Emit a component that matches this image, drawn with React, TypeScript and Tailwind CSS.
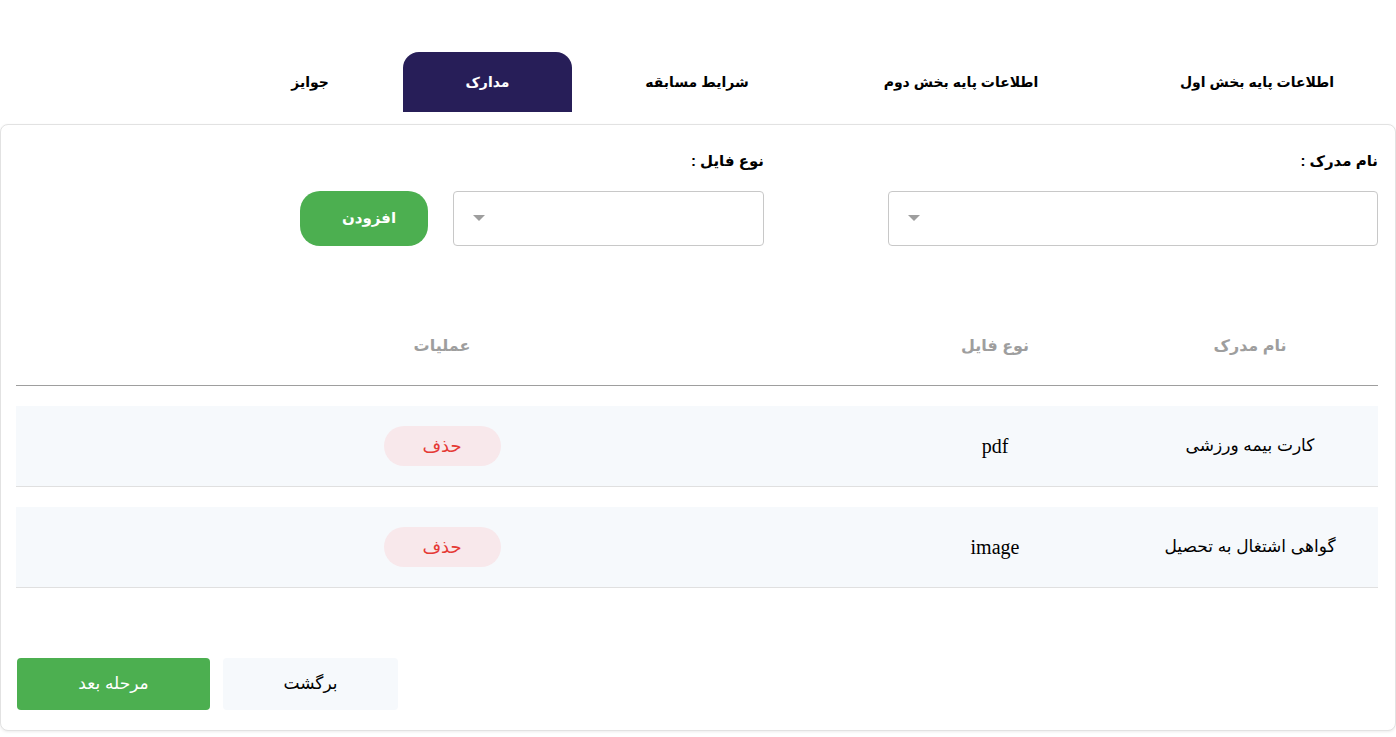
import React from "react";

const tabs = [
  { label: "اطلاعات پایه بخش اول", w: "w-[278px]", active: false },
  { label: "اطلاعات پایه بخش دوم", w: "w-[280px]", active: false },
  { label: "شرایط مسابقه", w: "w-[214px]", active: false },
  { label: "مدارک", w: "w-[169px] mr-[1px]", active: true },
  { label: "جوایز", w: "w-[152px]", active: false },
];

const rows = [
  { name: "کارت بیمه ورزشی", type: "pdf" },
  { name: "گواهی اشتغال به تحصیل", type: "image" },
];

function Caret() {
  return (
    <svg width="12" height="7" viewBox="0 0 12 7" className="shrink-0">
      <path d="M0 0 L12 0 L6 6 Z" fill="#9e9e9e" />
    </svg>
  );
}

function SelectBox({ w }: { w: string }) {
  return (
    <div
      className={`${w} h-[55px] rounded-[4px] border border-[#c8c8c8] bg-white flex items-center justify-end pl-[19px]`}
    >
      <Caret />
    </div>
  );
}

export default function App() {
  return (
    <div
      dir="rtl"
      className="w-[1396px] h-[737px] bg-white overflow-hidden text-black"
      style={{ fontFamily: '"Liberation Sans", "DejaVu Sans", sans-serif' }}
    >
      <div className="h-[52px]" />
      <div className="flex gap-[17px] h-[60px]">
        {tabs.map((t) => (
          <div
            key={t.label}
            className={`${t.w} h-[60px] flex items-center justify-center text-[14px] font-bold ${
              t.active ? "bg-[#271e58] text-white rounded-t-[16px]" : "text-black"
            }`}
          >
            {t.label}
          </div>
        ))}
      </div>

      <div className="mt-3 w-[1396px] h-[607px] rounded-[8px] border border-[#e2e2e2] shadow-[0_1px_3px_rgba(0,0,0,0.08)] bg-white pt-6 pr-[17px] pl-[16px] flex flex-col">
        <div className="flex items-end gap-0">
          <div className="w-[490px] flex flex-col">
            <div className="h-6 leading-6 text-[15px] font-bold mb-[18px]">نام مدرک :</div>
            <SelectBox w="w-[490px]" />
          </div>
          <div className="w-[311px] mr-[124px] flex flex-col">
            <div className="h-6 leading-6 text-[15px] font-bold mb-[18px]">نوع فایل :</div>
            <SelectBox w="w-[311px]" />
          </div>
          <button className="mr-[25px] w-[128px] h-[55px] rounded-[20px] bg-[#4caf50] text-white text-[15px] font-bold flex items-center justify-center pl-[10px]">
            افزودن
          </button>
        </div>

        <div className="mt-[60px] w-[1362px] flex flex-col">
          <div className="flex h-[80px] border-b border-[#9e9e9e] items-center text-[#9e9e9e] text-[16px] font-bold">
            <div className="w-[256px] text-center">نام مدرک</div>
            <div className="w-[254px] text-center">نوع فایل</div>
            <div className="flex-1 text-center">عملیات</div>
          </div>
          {rows.map((r) => (
            <div
              key={r.name}
              className="mt-5 flex h-[81px] bg-[#f6f9fc] border-b border-[#e0e0e0] items-center"
            >
              <div className="w-[256px] text-center text-[17px]">{r.name}</div>
              <div
                className="w-[254px] text-center text-[20px]"
                style={{ fontFamily: '"Liberation Serif", serif' }}
              >
                {r.type}
              </div>
              <div className="flex-1 flex justify-center">
                <button className="w-[117px] h-[40px] rounded-full bg-[#f8e8eb] text-[#e53935] text-[18px] flex items-center justify-center">
                  حذف
                </button>
              </div>
            </div>
          ))}
        </div>

        <div className="mt-auto mb-5 flex justify-end gap-[13px]">
          <button className="w-[175px] h-[52px] rounded-[4px] bg-[#f6f9fc] text-black text-[17px] flex items-center justify-center">
            برگشت
          </button>
          <button className="w-[193px] h-[52px] rounded-[4px] bg-[#4caf50] text-white text-[17px] flex items-center justify-center">
            مرحله بعد
          </button>
        </div>
      </div>
    </div>
  );
}
